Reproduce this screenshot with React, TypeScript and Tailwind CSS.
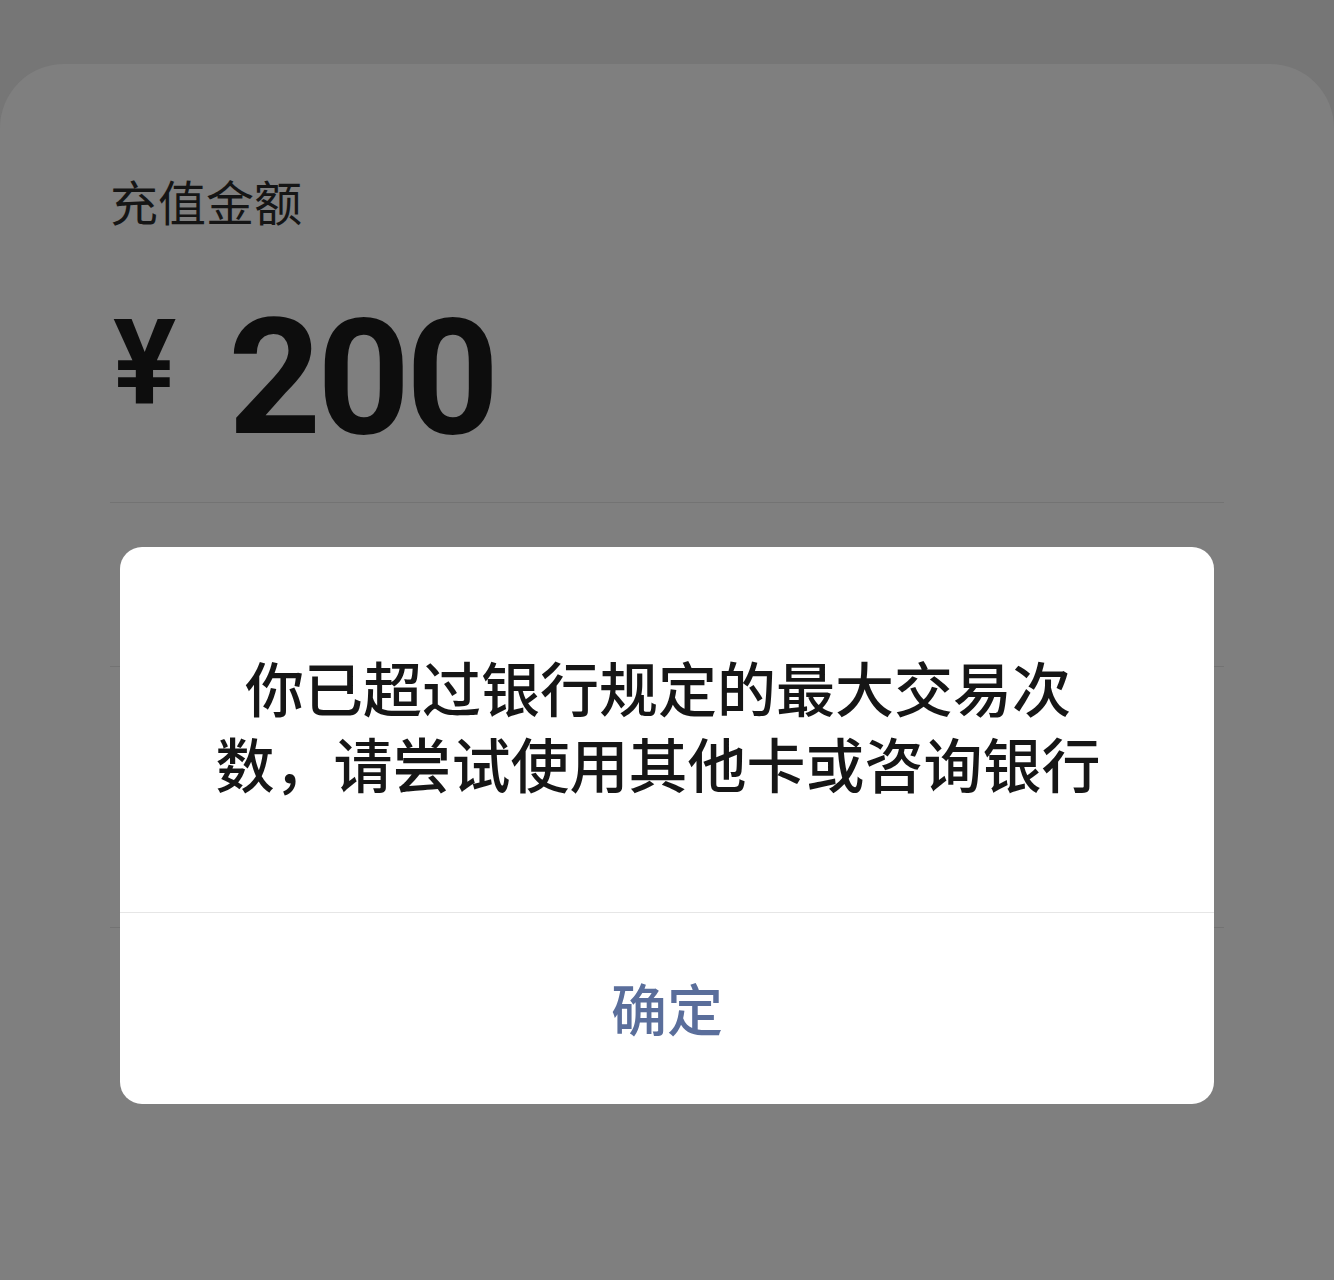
const cjk = "font-['Noto_Sans_CJK_SC',sans-serif]"

const App = () => {
  return (
    <div className="relative w-[1334px] h-[1280px] overflow-hidden bg-[#767676] pt-[64px]">
      <div className="h-full rounded-t-[64px] bg-[#7f7f7f] px-[110px] pt-[112px]">
        <div className={`${cjk} text-[48px] leading-none text-[#151515]`}>充值金额</div>

        <div className="mt-[73px] flex items-start h-[167px] font-['Roboto',sans-serif] font-bold text-[#0d0d0d]">
          <span className="mt-[7px] text-[118px] leading-none pl-[3px]">¥</span>
          <span className="ml-[52px] text-[162px] leading-none tracking-[-4px]">200</span>
        </div>

        <div className="mt-[38px] border-b border-[#737373]" />
        <div className="h-[164px] border-b border-[#737373]" />
        <div className="h-[261px] border-b border-[#737373]" />
      </div>

      {/* dialog */}
      <div className="absolute left-[120px] top-[547px] w-[1094px] h-[557px] rounded-[22px] bg-white flex flex-col overflow-hidden">
        <div className="h-[366px] flex items-center justify-center border-b border-[#e6e6e6]">
          <p className={`${cjk} -mt-[9px] text-[59px] leading-[76px] font-medium text-[#161616] text-center pr-[18px]`}>
            你已超过银行规定的最大交易次
            <br />
            数，请尝试使用其他卡或咨询银行
          </p>
        </div>
        <div className="flex-1 flex items-center justify-center pb-[3px]">
          <span className={`${cjk} text-[56px] leading-none font-medium text-[#5a6e9b]`}>确定</span>
        </div>
      </div>
    </div>
  )
}

export default App
